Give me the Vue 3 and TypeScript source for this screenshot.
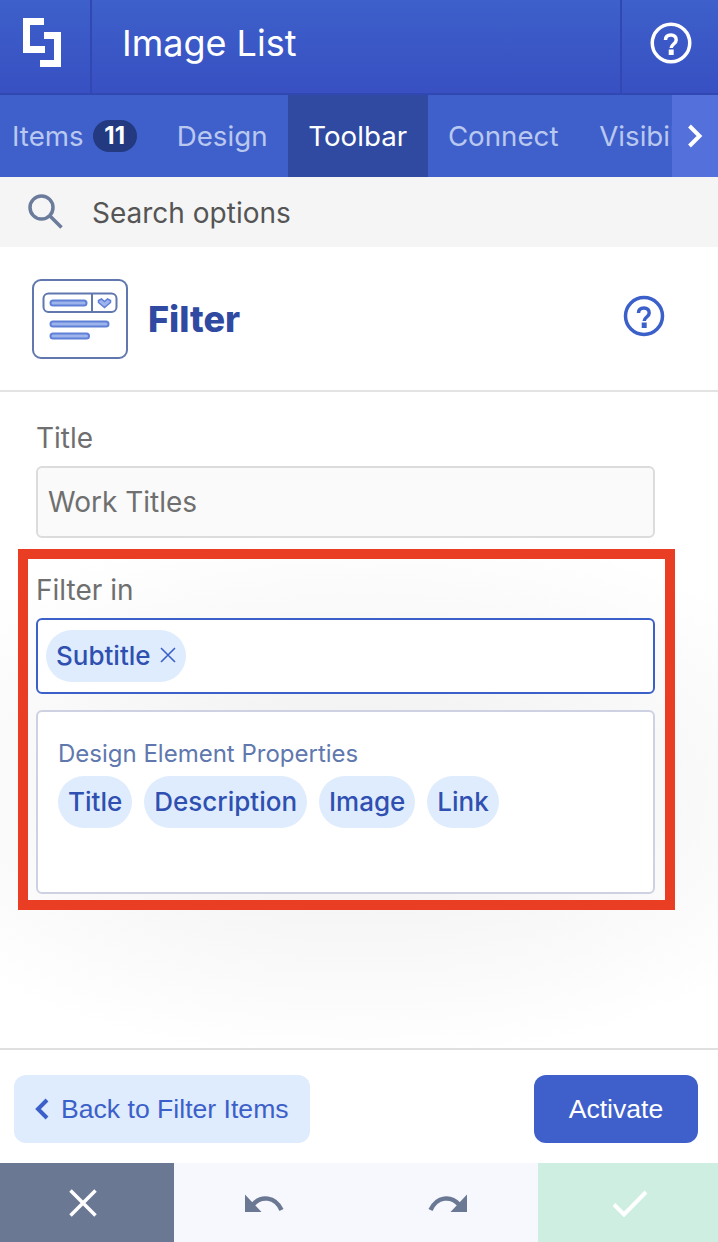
<script setup lang="ts">
const tabs = [
  { label: 'Items', badge: '11' },
  { label: 'Design' },
  { label: 'Toolbar', active: true },
  { label: 'Connect' },
  { label: 'Visibility' }
]
const properties = ['Title', 'Description', 'Image', 'Link']
</script>

<template>
  <div class="panel">
    <header class="top">
      <div class="logo-cell">
        <svg width="38" height="49" viewBox="0 0 38 49" fill="none" stroke="#fff" stroke-width="7">
          <path d="M21 3.500H3.500V31.500H22" />
          <path d="M21 17.500H34.500V45.500H17" />
        </svg>
      </div>
      <h1 class="title">Image List</h1>
      <div class="help-cell">
        <svg width="42" height="42" viewBox="0 0 42 42" fill="none" stroke="#fff" stroke-width="3.500">
          <circle cx="21" cy="21" r="18.750" />
          <path d="M15.500 18c0-3.500 2.500-5 5.500-5 3 0 5.500 2 5.200 5 0 4-5 4-5 8" />
          <path d="M21.200 27.500V33" stroke-width="5" />
        </svg>
      </div>
    </header>

    <nav class="tabs">
      <div v-for="tab in tabs" :key="tab.label" class="tab" :class="{ active: tab.active }">
        {{ tab.label }}
        <span v-if="tab.badge" class="badge">{{ tab.badge }}</span>
      </div>
      <div class="tabs-next">
        <svg width="16" height="26" viewBox="0 0 16 26" fill="none" stroke="#fff" stroke-width="4">
          <path d="M2.500 3L12.500 13L2.500 23" />
        </svg>
      </div>
    </nav>

    <div class="search">
      <svg width="36" height="36" viewBox="0 0 36 36" fill="none" stroke="#6b7b9c" stroke-width="3.500">
        <circle cx="13.500" cy="13.500" r="11.500" />
        <path d="M21.500 21.500L33.500 33.500" />
      </svg>
      <span class="search-text">Search options</span>
    </div>

    <div class="option-head">
      <div class="option-icon">
        <svg width="96" height="80" viewBox="0 0 96 80" fill="none">
          <rect x="1" y="1" width="94" height="78" rx="8" fill="#fff" stroke="#6078ae" stroke-width="2" />
          <rect x="11.500" y="14.500" width="73" height="18.500" rx="5" stroke="#6078ae" stroke-width="2" />
          <path d="M60 14.500V33" stroke="#6078ae" stroke-width="2" />
          <rect x="18.500" y="21.500" width="36" height="5" rx="2.500" fill="#9db4ec" stroke="#5f80d6" stroke-width="2" />
          <path d="M66.500 21.500l3-1.500 3 2.500 3-2.500 3 1.500v2l-6 5-6-5z" fill="#9db4ec" stroke="#5f80d6" stroke-width="1.500" />
          <rect x="18.500" y="42.500" width="58" height="5" rx="2.500" fill="#9db4ec" stroke="#5f80d6" stroke-width="2" />
          <rect x="18.500" y="54.500" width="38.500" height="5" rx="2.500" fill="#9db4ec" stroke="#5f80d6" stroke-width="2" />
        </svg>
      </div>
      <h2 class="option-name">Filter</h2>
      <svg class="option-help" width="42" height="42" viewBox="0 0 42 42" fill="none" stroke="#3c60c9" stroke-width="3.500">
        <circle cx="21" cy="21" r="18.500" />
        <path d="M15.500 18c0-3.500 2.500-5 5.500-5 3 0 5.500 2 5.200 5 0 4-5 4-5 8" />
        <path d="M21.200 27.500V33" stroke-width="5" />
      </svg>
    </div>

    <main class="form">
      <label class="field-label">Title</label>
      <div class="input">Work Titles</div>

      <label class="field-label filter-label">Filter in</label>
      <div class="input-tags">
        <span class="chip">
          Subtitle
          <svg width="16" height="16" viewBox="0 0 16 16" fill="none" stroke="#3c60c9" stroke-width="1.600">
            <path d="M1 1L15 15M15 1L1 15" />
          </svg>
        </span>
      </div>
      <div class="suggest">
        <div class="suggest-title">Design Element Properties</div>
        <div class="chips">
          <span v-for="p in properties" :key="p" class="chip">{{ p }}</span>
        </div>
      </div>

      <div class="highlight"></div>
    </main>

    <div class="actions">
      <button class="back">
        <svg width="16" height="24" viewBox="0 0 16 24" fill="none" stroke="#3c60c9" stroke-width="4">
          <path d="M13 3L4 12L13 21" />
        </svg>
        Back to Filter Items
      </button>
      <button class="activate">Activate</button>
    </div>

    <footer class="bottom">
      <div class="cancel">
        <svg width="30" height="30" viewBox="0 0 30 30" fill="none" stroke="#fff" stroke-width="3.500">
          <path d="M2.500 2.500L27.500 27.500M27.500 2.500L2.500 27.500" />
        </svg>
      </div>
      <div class="history">
        <svg width="39" height="20" viewBox="0 0 39 20" fill="#6b7894">
          <path d="M0 1.500V19H16.500Z" />
          <path d="M8 11.500C16 2.500 30 3 36.500 17" fill="none" stroke="#6b7894" stroke-width="4.500" />
        </svg>
        <svg width="39" height="20" viewBox="0 0 39 20" fill="#6b7894">
          <path d="M39 1.500V19H22.500Z" />
          <path d="M31 11.500C23 2.500 9 3 2.500 17" fill="none" stroke="#6b7894" stroke-width="4.500" />
        </svg>
      </div>
      <div class="confirm">
        <svg width="36" height="28" viewBox="0 0 36 28" fill="none" stroke="#fff" stroke-width="4">
          <path d="M2 15.500L12 25.500L34 3" />
        </svg>
      </div>
    </footer>
  </div>
</template>

<style scoped>
.panel {
  width: 718px;
  height: 1242px;
  display: flex;
  flex-direction: column;
  overflow: hidden;
  font-family: Inter, "Liberation Sans", sans-serif;
  background: #fff;
}

.top {
  height: 95px;
  flex: none;
  display: flex;
  box-sizing: border-box;
  border-bottom: 2px solid #3148b2;
  background: linear-gradient(#3d60ca, #3850c2);
}

.logo-cell {
  width: 92px;
  box-sizing: border-box;
  border-right: 2px solid #3148b2;
  display: flex;
  align-items: center;
  justify-content: center;
  padding: 0 6px 8px 0;
}

.title {
  flex: 1;
  margin: 0;
  padding-left: 30px;
  font-size: 36px;
  font-weight: 400;
  line-height: 87px;
  color: #fff;
}

.help-cell {
  width: 98px;
  box-sizing: border-box;
  border-left: 2px solid #3148b2;
  display: flex;
  align-items: center;
  justify-content: center;
  padding: 0 0 8px 2px;
}

.tabs {
  height: 82px;
  flex: none;
  display: flex;
  position: relative;
  overflow: hidden;
  background: #3f60ca;
}

.tab {
  flex: none;
  display: flex;
  align-items: center;
  gap: 9px;
  padding: 0 20.4px;
  font-size: 27.7px;
  color: #b9c8ef;
  white-space: nowrap;
}

.tab:first-child {
  padding-left: 12px;
  padding-right: 19.7px;
}

.tab.active {
  background: #2f4aa0;
  color: #fff;
}

.badge {
  width: 44px;
  height: 32px;
  border-radius: 16px;
  background: #233a80;
  color: #fff;
  font-size: 24px;
  font-weight: 700;
  line-height: 32px;
  text-align: center;
}

.tabs-next {
  position: absolute;
  right: 0;
  top: 0;
  bottom: 0;
  width: 46px;
  display: flex;
  align-items: center;
  justify-content: center;
  background: #5470da;
}

.search {
  height: 70px;
  flex: none;
  display: flex;
  align-items: center;
  gap: 28px;
  padding-left: 28px;
  background: #f5f5f5;
  color: #555;
  font-size: 28px;
}

.search-text {
  margin-top: 1px;
}

.option-head {
  height: 145px;
  flex: none;
  display: flex;
  align-items: center;
  box-sizing: border-box;
  padding: 0 53px 0 32px;
  border-bottom: 2px solid #e3e3e3;
}

.option-icon {
  display: flex;
  margin-top: 1px;
}

.option-name {
  flex: 1;
  margin: 0 0 0 20px;
  font-size: 36px;
  font-weight: 800;
  color: #2f4aa0;
}

.option-help {
  margin-bottom: 6px;
}

.form {
  flex: 1;
  position: relative;
  padding: 27px 63px 0 36px;
  background: radial-gradient(ellipse 520px 270px at 50% 400px, #eeeeee, #fff);
}

.field-label {
  display: block;
  font-size: 28px;
  line-height: 38px;
  color: #6f6f6f;
}

.input {
  height: 72px;
  margin-top: 9px;
  box-sizing: border-box;
  padding-left: 10px;
  border: 2px solid #dcdcdc;
  border-radius: 6px;
  background: #fafafa;
  color: #6f6f6f;
  font-size: 28px;
  line-height: 69px;
}

.filter-label {
  margin-top: 33px;
}

.input-tags {
  height: 76px;
  margin-top: 9px;
  box-sizing: border-box;
  display: flex;
  align-items: center;
  padding-left: 8px;
  border: 2px solid #3c60c9;
  border-radius: 6px;
  background: #fff;
}

.chip {
  height: 52px;
  box-sizing: border-box;
  display: inline-flex;
  align-items: center;
  gap: 9px;
  padding: 0 10px 2px;
  border-radius: 26px;
  background: #dfecfd;
  color: #2f50b0;
  font-size: 26px;
  font-weight: 500;
}

.suggest {
  height: 184px;
  margin-top: 16px;
  box-sizing: border-box;
  padding: 27px 20px 0;
  border: 2px solid #cdd1e2;
  border-radius: 6px;
  background: #fff;
}

.suggest-title {
  font-size: 24px;
  line-height: 30px;
  color: #6078ae;
}

.chips {
  display: flex;
  gap: 12px;
  margin-top: 7px;
}

.highlight {
  position: absolute;
  left: 18px;
  top: 157px;
  width: 657px;
  height: 361px;
  box-sizing: border-box;
  border: 10px solid #e93e24;
}

.actions {
  height: 115px;
  flex: none;
  box-sizing: border-box;
  display: flex;
  justify-content: space-between;
  padding: 25px 20px 0 14px;
  border-top: 2px solid #e0e0e0;
  background: #fff;
}

.actions button {
  height: 68px;
  border: none;
  border-radius: 12px;
  font-family: "Liberation Sans", Arial, sans-serif;
  font-size: 26.6px;
}

.back {
  width: 296px;
  display: flex;
  align-items: center;
  gap: 11px;
  padding: 0 0 0 20px;
  background: #dfecfd;
  color: #3c60c9;
}

.activate {
  width: 164px;
  padding: 0;
  background: #3f60ca;
  color: #fff;
}

.bottom {
  height: 79px;
  flex: none;
  display: flex;
}

.cancel {
  width: 174px;
  box-sizing: border-box;
  display: flex;
  align-items: center;
  justify-content: center;
  padding-right: 8px;
  background: #6b7894;
}

.history {
  flex: 1;
  display: flex;
  align-items: center;
  justify-content: space-between;
  padding: 0 71px;
  background: #f6f8fd;
}

.confirm {
  width: 180px;
  box-sizing: border-box;
  display: flex;
  align-items: center;
  justify-content: center;
  padding-left: 3px;
  background: #cdeee0;
}
</style>
